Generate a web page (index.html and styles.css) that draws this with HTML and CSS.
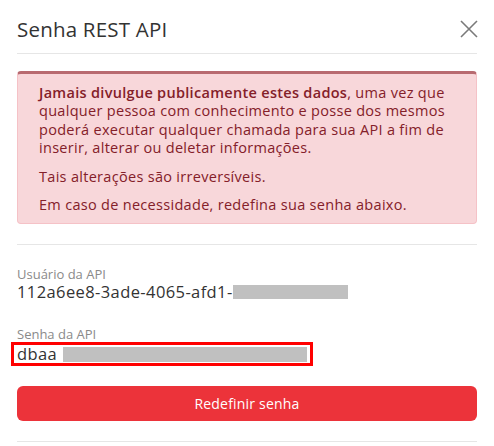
FILE: index.html
```html
<!DOCTYPE html>
<html lang="pt-BR">
<head>
    <meta charset="UTF-8">
    <meta name="viewport" content="width=device-width, initial-scale=1.0">
    <title>Senha REST API</title>
    <link rel="stylesheet" href="styles.css">
</head>
<body>
    <div class="modal">
        <header class="modal-header">
            <h2>Senha REST API</h2>
            <button class="close-btn" aria-label="Fechar">
                <svg width="18" height="18" viewBox="0 0 18 18">
                    <path d="M1 1 L17 17 M17 1 L1 17" stroke="#7a7a7a" stroke-width="1.6" fill="none"/>
                </svg>
            </button>
        </header>

        <div class="alert">
            <p><strong>Jamais divulgue publicamente estes dados</strong>, uma vez que qualquer pessoa com conhecimento e posse dos mesmos poderá executar qualquer chamada para sua API a fim de inserir, alterar ou deletar informações.</p>
            <p>Tais alterações são irreversíveis.</p>
            <p>Em caso de necessidade, redefina sua senha abaixo.</p>
        </div>

        <hr class="divider">

        <div class="field">
            <label>Usuário da API</label>
            <div class="value">112a6ee8-3ade-4065-afd1-<span class="redacted user-redacted"></span></div>
        </div>

        <div class="field">
            <label>Senha da API</label>
            <div class="value highlight">dbaa<span class="redacted pass-redacted"></span></div>
        </div>

        <button class="reset-btn">Redefinir senha</button>

        <hr class="divider bottom">
    </div>
</body>
</html>
```

FILE: styles.css
```css
:root {
    --text-color: #333333;
    --muted: #8a8a8a;
    --line: #e6e6e6;
    --danger: #ec333a;
}

* {
    margin: 0;
    padding: 0;
    box-sizing: border-box;
}

body {
    font-family: 'Open Sans', sans-serif;
    color: var(--text-color);
    background: #ffffff;
}

.modal {
    padding: 0 17px;
}

.modal-header {
    display: flex;
    justify-content: space-between;
    align-items: center;
    height: 54px;
    padding-top: 4px;
    border-bottom: 1px solid var(--line);
}

.modal-header h2 {
    font-size: 20.5px;
    font-weight: 400;
    letter-spacing: 0.2px;
    color: #333;
}

.close-btn {
    background: none;
    border: none;
    cursor: pointer;
    width: 18px;
    height: 18px;
    margin-right: -1px;
}

.alert {
    margin-top: 17px;
    background-color: #f8d7da;
    color: #842029;
    border: 1px solid #f5c2c7;
    border-top: 3px solid #b86a70;
    border-radius: 4px;
    padding: 10px 21px 9px;
    font-size: 14.5px;
    letter-spacing: 0.3px;
    line-height: 18.4px;
}

.alert p {
    margin-bottom: 10px;
}

.alert p:last-child {
    margin-bottom: 0;
}

.alert strong {
    font-weight: 600;
}

.divider {
    border: none;
    border-top: 1px solid var(--line);
    margin-top: 20px;
}

.field {
    margin-top: 22px;
}

.field + .field {
    margin-top: 25px;
}

.field label {
    display: block;
    font-size: 13px;
    color: var(--muted);
    line-height: 15px;
}

.value {
    font-size: 16.5px;
    letter-spacing: 0.4px;
    line-height: 20px;
    color: #333;
    display: flex;
    align-items: center;
}

.redacted {
    display: inline-block;
    background: #c0c0c0;
}

.user-redacted {
    width: 115px;
    height: 14px;
}

.highlight {
    border: 3px solid #ff0000;
    width: 302px;
    height: 24px;
    margin-left: -6px;
    margin-top: 0;
    padding-left: 3px;
}

.pass-redacted {
    width: 244px;
    height: 15px;
    margin-left: 6px;
}

.reset-btn {
    display: block;
    width: 100%;
    height: 35px;
    margin-top: 20px;
    background-color: var(--danger);
    color: #fff;
    border: none;
    border-radius: 6px;
    font-family: 'Open Sans', sans-serif;
    font-size: 14px;
    font-weight: 500;
    letter-spacing: 0.2px;
    cursor: pointer;
}

.divider.bottom {
    margin-top: 20px;
}
```
